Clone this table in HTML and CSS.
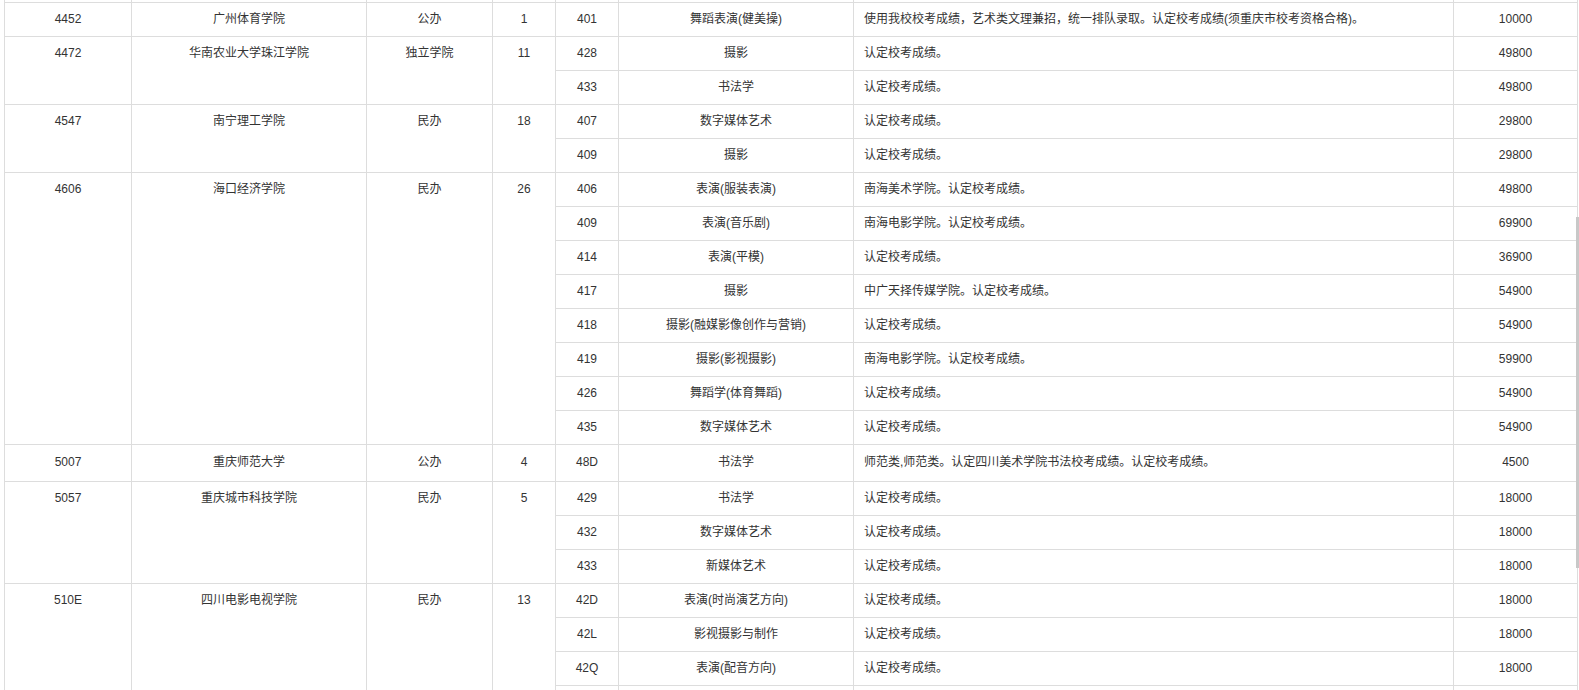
FILE: index.html
```html
<!DOCTYPE html>
<html lang="zh-CN">
<head>
<meta charset="utf-8">
<title>院校专业计划</title>
<link rel="stylesheet" href="styles.css">
</head>
<body>
<div class="page">
  <table class="plan">
    <colgroup>
      <col class="c-code"><col class="c-name"><col class="c-type"><col class="c-num">
      <col class="c-mcode"><col class="c-major"><col class="c-note"><col class="c-fee">
    </colgroup>
    <tbody>
      <tr class="edge"><td></td><td></td><td></td><td></td><td></td><td></td><td class="note"></td><td></td></tr>

      <tr><td>4452</td><td>广州体育学院</td><td>公办</td><td>1</td><td>401</td><td>舞蹈表演(健美操)</td><td class="note">使用我校校考成绩，艺术类文理兼招，统一排队录取。认定校考成绩(须重庆市校考资格合格)。</td><td>10000</td></tr>

      <tr><td rowspan="2">4472</td><td rowspan="2">华南农业大学珠江学院</td><td rowspan="2">独立学院</td><td rowspan="2">11</td><td>428</td><td>摄影</td><td class="note">认定校考成绩。</td><td>49800</td></tr>
      <tr><td>433</td><td>书法学</td><td class="note">认定校考成绩。</td><td>49800</td></tr>

      <tr><td rowspan="2">4547</td><td rowspan="2">南宁理工学院</td><td rowspan="2">民办</td><td rowspan="2">18</td><td>407</td><td>数字媒体艺术</td><td class="note">认定校考成绩。</td><td>29800</td></tr>
      <tr><td>409</td><td>摄影</td><td class="note">认定校考成绩。</td><td>29800</td></tr>

      <tr><td rowspan="8">4606</td><td rowspan="8">海口经济学院</td><td rowspan="8">民办</td><td rowspan="8">26</td><td>406</td><td>表演(服装表演)</td><td class="note">南海美术学院。认定校考成绩。</td><td>49800</td></tr>
      <tr><td>409</td><td>表演(音乐剧)</td><td class="note">南海电影学院。认定校考成绩。</td><td>69900</td></tr>
      <tr><td>414</td><td>表演(平模)</td><td class="note">认定校考成绩。</td><td>36900</td></tr>
      <tr><td>417</td><td>摄影</td><td class="note">中广天择传媒学院。认定校考成绩。</td><td>54900</td></tr>
      <tr><td>418</td><td>摄影(融媒影像创作与营销)</td><td class="note">认定校考成绩。</td><td>54900</td></tr>
      <tr><td>419</td><td>摄影(影视摄影)</td><td class="note">南海电影学院。认定校考成绩。</td><td>59900</td></tr>
      <tr><td>426</td><td>舞蹈学(体育舞蹈)</td><td class="note">认定校考成绩。</td><td>54900</td></tr>
      <tr><td>435</td><td>数字媒体艺术</td><td class="note">认定校考成绩。</td><td>54900</td></tr>

      <tr class="tall"><td>5007</td><td>重庆师范大学</td><td>公办</td><td>4</td><td>48D</td><td>书法学</td><td class="note">师范类,师范类。认定四川美术学院书法校考成绩。认定校考成绩。</td><td>4500</td></tr>

      <tr><td rowspan="3">5057</td><td rowspan="3">重庆城市科技学院</td><td rowspan="3">民办</td><td rowspan="3">5</td><td>429</td><td>书法学</td><td class="note">认定校考成绩。</td><td>18000</td></tr>
      <tr><td>432</td><td>数字媒体艺术</td><td class="note">认定校考成绩。</td><td>18000</td></tr>
      <tr><td>433</td><td>新媒体艺术</td><td class="note">认定校考成绩。</td><td>18000</td></tr>

      <tr><td rowspan="4">510E</td><td rowspan="4">四川电影电视学院</td><td rowspan="4">民办</td><td rowspan="4">13</td><td>42D</td><td>表演(时尚演艺方向)</td><td class="note">认定校考成绩。</td><td>18000</td></tr>
      <tr><td>42L</td><td>影视摄影与制作</td><td class="note">认定校考成绩。</td><td>18000</td></tr>
      <tr><td>42Q</td><td>表演(配音方向)</td><td class="note">认定校考成绩。</td><td>18000</td></tr>
      <tr class="edge"><td></td><td></td><td class="note"></td><td></td></tr>
    </tbody>
  </table>
  <div class="thumb"></div>
</div>
</body>
</html>
```
FILE: styles.css
```css
html, body {
  margin: 0;
  padding: 0;
  background: #fff;
  overflow: hidden;
}

.page {
  position: relative;
  height: 690px;
  overflow: hidden;
  padding-left: 4px;
  font-family: "Liberation Sans", Arial, "Noto Sans CJK SC", sans-serif;
  font-size: 12px;
  color: #333;
}

.plan {
  border-collapse: collapse;
  table-layout: fixed;
  width: 1573px;
  margin-top: -32px;
}

.c-code { width: 127px; }
.c-name { width: 235px; }
.c-type { width: 126px; }
.c-num { width: 63px; }
.c-mcode { width: 63px; }
.c-major { width: 235px; }
.c-note { width: 600px; }
.c-fee { width: 124px; }

.plan td {
  border: 1px solid #dddddd;
  padding: 8px 4px;
  height: 17px;
  line-height: 17px;
  text-align: center;
  vertical-align: top;
  white-space: nowrap;
  overflow: hidden;
}

.plan tr.tall td {
  height: 19px;
  padding-top: 9px;
}

.plan td.note {
  text-align: left;
  padding-left: 10px;
}

.thumb {
  position: absolute;
  top: 217px;
  left: 1576px;
  width: 3px;
  height: 351px;
  background: #c8c8c8;
}
```
